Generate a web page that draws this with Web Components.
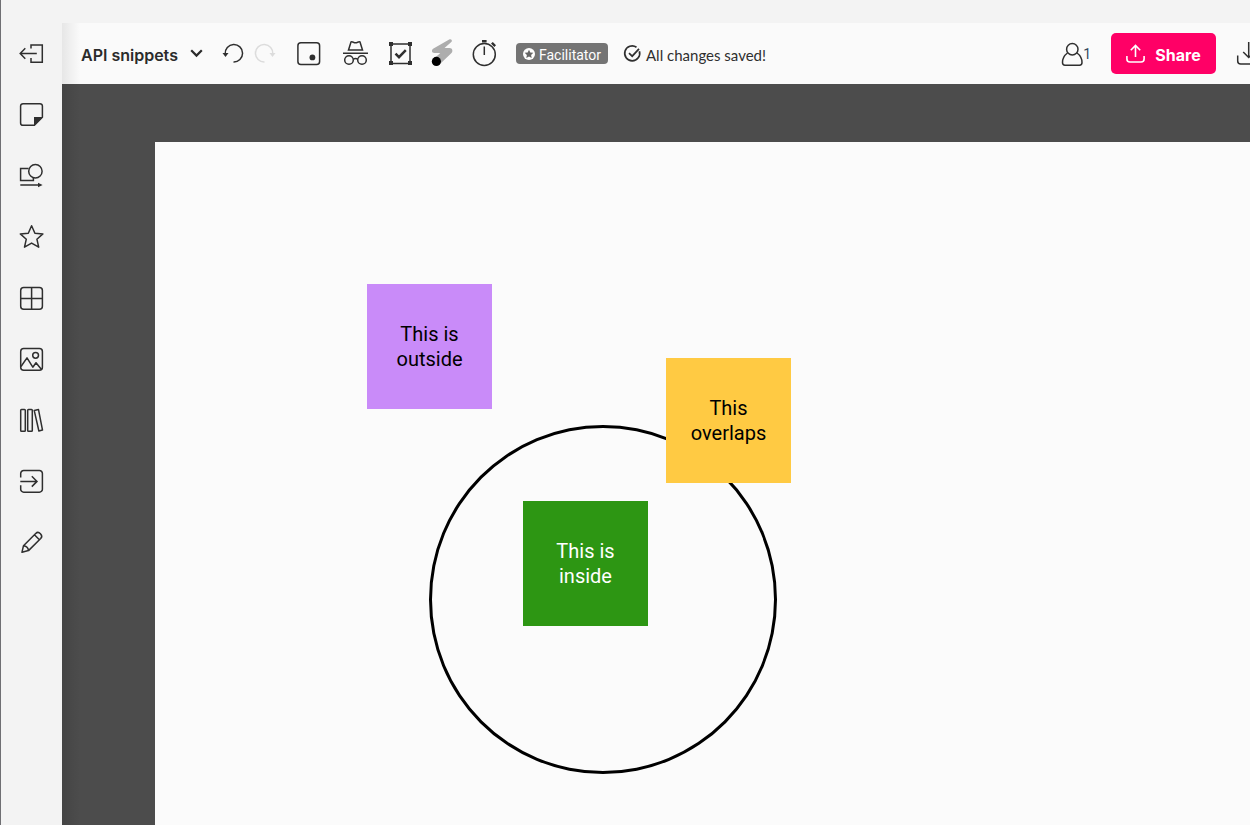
<!DOCTYPE html>
<html lang="en">
<head>
<meta charset="utf-8">
<meta name="viewport" content="width=device-width, initial-scale=1">
<title>API snippets</title>
<style>
  html, body { margin: 0; height: 100%; }
  body { font-family: Roboto, "Liberation Sans", sans-serif; color: #2f2f2f; background: #f3f3f3; overflow: hidden; }
</style>
</head>
<body>
<mural-app></mural-app>

<template id="t-app">
  <style>
    :host { display: flex; min-height: 100vh; background: #f3f3f3; }
    .work { flex: 1; min-width: 0; display: flex; flex-direction: column; padding-top: 23px; }
    mural-board { flex: 1; }
  </style>
  <mural-sidebar></mural-sidebar>
  <div class="work">
    <mural-topbar></mural-topbar>
    <mural-board>
      <board-ring style="left:274px;top:283px"></board-ring>
      <sticky-note style="left:212px;top:142px;--fill:#c98bf9">This is outside</sticky-note>
      <sticky-note style="left:511px;top:216px;--fill:#ffca43">This overlaps</sticky-note>
      <sticky-note style="left:368px;top:359px;--fill:#2d9613;--ink:#fff">This is inside</sticky-note>
    </mural-board>
  </div>
</template>

<template id="t-icon-button">
  <style>
    :host { display: block; }
    button { display: flex; width: 100%; height: 100%; align-items: center; justify-content: center; margin: 0; padding: 0; border: 0; background: none; color: inherit; font: inherit; cursor: pointer; }
    button:disabled { color: #dcdcdc; cursor: default; }
    ::slotted(svg) { display: block; flex: none; overflow: visible; fill: none; stroke: currentColor; stroke-width: 1.5; }
  </style>
  <button type="button"><slot></slot></button>
</template>

<template id="t-sidebar">
  <style>
    :host { display: block; box-sizing: border-box; width: 62px; flex: none; padding-top: 23px; border-left: 1px solid #6f6f73; background: #f3f3f3; }
    nav { display: flex; flex-direction: column; }
    icon-button { height: 61px; }
  </style>
  <nav aria-label="Tools">
    <icon-button label="Exit"><svg width="25" height="25" viewBox="0 0 25 25"><path d="M12 7.500V4h11.300v17.300H12V17M1.200 12.400h16.600M6.300 7.200 1.200 12.400l5.100 5.300"/></svg></icon-button>
    <icon-button label="Sticky notes"><svg width="25" height="25" viewBox="0 0 25 25"><path d="M4 1.700h17a2.400 2.400 0 0 1 2.400 2.400v11.200l-8 8H4a2.400 2.400 0 0 1-2.400-2.400V4.100A2.400 2.400 0 0 1 4 1.700z"/><path d="M15 15h8.700L15 23.700z" fill="currentColor" stroke="none"/></svg></icon-button>
    <icon-button label="Shapes and connectors"><svg width="25" height="25" viewBox="0 0 25 25"><path d="M9.600 5.600H1.600v12h12.800v-2.500M1.300 22h19"/><circle cx="16.400" cy="8.300" r="6.700"/><path d="m19 19.800 4.600 2.200-4.600 2.200z" fill="currentColor" stroke="none"/></svg></icon-button>
    <icon-button label="Icons"><svg width="25" height="25" viewBox="0 0 25 25"><path stroke-linejoin="round" d="m12.600 1.700 3.300 7.500 8 .7-6 5.300 1.800 8-7.100-4.100-7.100 4.100 1.800-8-6-5.300 8-.7z"/></svg></icon-button>
    <icon-button label="Frameworks"><svg width="25" height="25" viewBox="0 0 25 25"><rect x="1.700" y="2.500" width="21.700" height="21.700" rx="3"/><path d="M12.600 2.500v21.700M1.700 13.500h21.700"/></svg></icon-button>
    <icon-button label="Images"><svg width="25" height="25" viewBox="0 0 25 25"><rect x="1.700" y="2.500" width="21.700" height="21.700" rx="3"/><circle cx="16.600" cy="9.300" r="2.900"/><path stroke-linejoin="round" d="m2 20.500 6-8.600 5.800 9.300 3.200-4.500 5.500 6.700"/></svg></icon-button>
    <icon-button label="Library"><svg width="25" height="25" viewBox="0 0 25 25"><rect x="1.700" y="2.500" width="4.600" height="21.700" rx=".8"/><rect x="8.700" y="2.500" width="4.600" height="21.700" rx=".8"/><path stroke-linejoin="round" d="m15.200 3.400 4.300-.8 4 20.500-3.600.9z"/></svg></icon-button>
    <icon-button label="Import"><svg width="25" height="25" viewBox="0 0 25 25"><path d="M1.700 9.500v-4a3 3 0 0 1 3-3h15.700a3 3 0 0 1 3 3v15.700a3 3 0 0 1-3 3H4.700a3 3 0 0 1-3-3v-4M1.300 13.400H18M12.800 8.200l5.200 5.200-5.200 5.200"/></svg></icon-button>
    <icon-button label="Draw"><svg width="25" height="25" viewBox="0 0 25 25"><path stroke-linejoin="round" d="m3 23.200 1.500-6.500L16.700 4.500c3-3 8 1.800 5 5L9.500 21.600zM4.500 16.700c3.300.3 4.700 2 5 4.900M15.400 5.800l5 5"/></svg></icon-button>
  </nav>
</template>

<template id="t-topbar">
  <style>
    :host { display: flex; align-items: center; height: 61px; overflow: hidden; padding-left: 19px; background: linear-gradient(90deg, rgba(0,0,0,.08), transparent 18px) #fafafa; }
    .title { display: flex; align-items: center; justify-content: space-between; width: 122px; margin: 0 19px 0 0; padding: 0; border: 0; background: none; color: #2b2b2b; font: 600 16px/24px Inter, sans-serif; white-space: nowrap; cursor: pointer; }
    .title span, .share span, .badge span, .status span { padding-top: 2px; }
    .history { display: flex; gap: 12px; margin-right: 20px; }
    .tools { display: flex; align-items: center; gap: 20px; }
    .badge { display: flex; align-items: center; justify-content: center; gap: 4px; width: 92px; height: 21px; border-radius: 4px; background: #747474; color: #fff; font-size: 14px; line-height: 20px; }
    .status { display: flex; align-items: center; gap: 5px; margin-left: 16px; font: 15px/20px Lato, sans-serif; white-space: nowrap; }
    .actions { display: flex; align-items: center; gap: 20px; margin: 0 -11px 0 auto; }
    .count { font-size: 14px; color: #33475c; }
    .share { display: flex; align-items: center; justify-content: center; gap: 10px; width: 105px; height: 41px; margin: 0; padding: 0; border: 0; border-radius: 5px; background: #ff0066; color: #fff; font: 700 16px/24px Inter, sans-serif; cursor: pointer; }
    svg { flex: none; overflow: visible; }
  </style>
  <button class="title" type="button"><span>API snippets</span>
    <svg width="13" height="9" viewBox="0 0 13 9" fill="none" stroke="currentColor" stroke-width="2.200"><path d="m1.200 1.200 5.300 5.400 5.300-5.400"/></svg>
  </button>
  <div class="history">
    <icon-button label="Undo"><svg width="21" height="25" viewBox="0 0 21 25"><path d="M3.200 13A8.700 8.700 0 1 1 11.500 20.900"/><path d="M.5 12h6l-3 4z" fill="currentColor" stroke="none"/></svg></icon-button>
    <icon-button label="Redo" disabled><svg width="21" height="25" viewBox="0 0 21 25"><path d="M17.800 13A8.700 8.700 0 1 0 9.500 20.900"/><path d="M20.500 12h-6l3 4z" fill="currentColor" stroke="none"/></svg></icon-button>
  </div>
  <div class="tools">
    <icon-button label="Mini map"><svg width="26" height="25" viewBox="0 0 26 25"><rect x="1.900" y="1.700" width="21.700" height="21.700" rx="3"/><circle cx="16.400" cy="16.400" r="2.900" fill="currentColor" stroke="none"/></svg></icon-button>
    <icon-button label="Private mode"><svg width="27" height="25" viewBox="0 0 27 25"><path d="M1 12.300h25M6.500 9 9 1c1.500-.8 2.500.8 4.500.8S16.500.2 18 1l2.500 8zM11.300 18.200q2.200-1.200 4.400 0"/><circle cx="7" cy="19" r="4.300"/><circle cx="20" cy="19" r="4.300"/></svg></icon-button>
    <icon-button label="Select"><svg width="23" height="25" viewBox="0 0 23 25"><path d="M2 3h19v19.500H2z"/><path d="M0 1h4v4H0zM19 1h4v4h-4zM0 20h4v4H0zM19 20h4v4h-4z" fill="currentColor" stroke="none"/><path d="m6.500 12.700 3.500 3.500 6.800-7" stroke-width="2.500"/></svg></icon-button>
    <icon-button label="Laser pointer"><svg width="20" height="29" viewBox="0 0 20 29"><path fill="#adadad" stroke="none" d="M17.200.4c2-1 3.700 1.200 2.100 2.600L12.500 9h5c3.200 0 3.800 3.600 1.500 5.600L8.500 24.500 3 18.700 8.300 14H2.500C-.5 14-.8 11 1.500 9.500z"/><circle cx="4.400" cy="22.400" r="4.600" fill="#000" stroke="none"/></svg></icon-button>
    <icon-button label="Timer"><svg width="24" height="29" viewBox="0 0 24 29"><circle cx="12.300" cy="15.500" r="11"/><path d="M12.300 7.500v8.500"/><path d="M10 1h4.600v2.600H10zM19 4.600l1.800-1.600L24 6.200l-1.700 1.700z" fill="currentColor" stroke="none"/></svg></icon-button>
    <span class="badge"><svg width="12" height="12" viewBox="0 0 12 12"><circle cx="6" cy="6" r="6" fill="#fff"/><path fill="#666" d="m6 1.700 1.300 2.700 3 .4-2.200 2.100.6 3L6 8.500 3.300 9.900l.6-3-2.200-2.100 3-.4z"/></svg><span>Facilitator</span></span>
  </div>
  <div class="status" role="status"><svg width="17" height="17" viewBox="0 0 17 17" fill="none" stroke="#2f2f2f" stroke-width="1.700"><path d="M15.400 6.200A7.500 7.500 0 1 1 12.500 2.200M5 8.200l3.200 3L15 3.800"/></svg><span>All changes saved!</span></div>
  <div class="actions">
    <icon-button label="Collaborators"><svg width="22" height="25" viewBox="0 0 22 25"><circle cx="11.300" cy="8.300" r="5.700"/><path d="M6.500 12C3 14.500 1.500 18 1.500 21.500q0 2.700 2.500 2.700h14.500q2.500 0 2.500-2.700c0-3.500-1.500-7-5-9.500"/></svg><span class="count">1</span></icon-button>
    <button class="share" type="button"><svg width="19" height="19" viewBox="0 0 19 19" fill="none" stroke="currentColor" stroke-width="1.600"><path d="M.9 12v3q0 3 3 3h11.200q3 0 3-3v-3M9.500 13V1.500M4.800 6.200l4.700-4.700 4.700 4.700"/></svg><span>Share</span></button>
    <icon-button label="Download"><svg width="25" height="25" viewBox="0 0 25 25"><path d="M1.700 14.500v5.500q0 3 3 3h15.600q3 0 3-3v-5.500M12.700 1v15.500M7.200 11l5.500 5.500 5.500-5.500"/></svg></icon-button>
  </div>
</template>

<template id="t-board">
  <style>
    :host { display: flex; min-height: 0; overflow: hidden; padding: 58px 0 0 93px; background: linear-gradient(90deg, rgba(0,0,0,.1), transparent 18px) #4c4c4c; }
    .canvas { position: relative; flex: 1; background: #fbfbfb; }
  </style>
  <div class="canvas"><slot></slot></div>
</template>

<template id="t-note">
  <style>
    :host { position: absolute; display: flex; align-items: center; justify-content: center; box-sizing: border-box; width: 125px; height: 125px; padding: 0 22px; background: var(--fill); color: var(--ink, #000); font-size: 20px; line-height: 25px; text-align: center; }
  </style>
  <span><slot></slot></span>
</template>

<template id="t-ring">
  <style>
    :host { position: absolute; box-sizing: border-box; width: 348px; height: 349px; border: 3px solid #000; border-radius: 50%; }
  </style>
</template>

<script>
  class TemplateElement extends HTMLElement {
    connectedCallback() {
      if (this.shadowRoot) return;
      const root = this.attachShadow({ mode: "open" });
      root.append(document.getElementById(this.constructor.template).content.cloneNode(true));
      this.ready(root);
    }
    ready() {}
  }
  customElements.define("icon-button", class extends TemplateElement {
    static template = "t-icon-button";
    ready(root) {
      const button = root.querySelector("button");
      button.setAttribute("aria-label", this.getAttribute("label"));
      button.disabled = this.hasAttribute("disabled");
    }
  });
  customElements.define("sticky-note", class extends TemplateElement { static template = "t-note"; });
  customElements.define("board-ring", class extends TemplateElement { static template = "t-ring"; });
  customElements.define("mural-board", class extends TemplateElement { static template = "t-board"; });
  customElements.define("mural-sidebar", class extends TemplateElement { static template = "t-sidebar"; });
  customElements.define("mural-topbar", class extends TemplateElement { static template = "t-topbar"; });
  customElements.define("mural-app", class extends TemplateElement { static template = "t-app"; });
</script>
</body>
</html>
